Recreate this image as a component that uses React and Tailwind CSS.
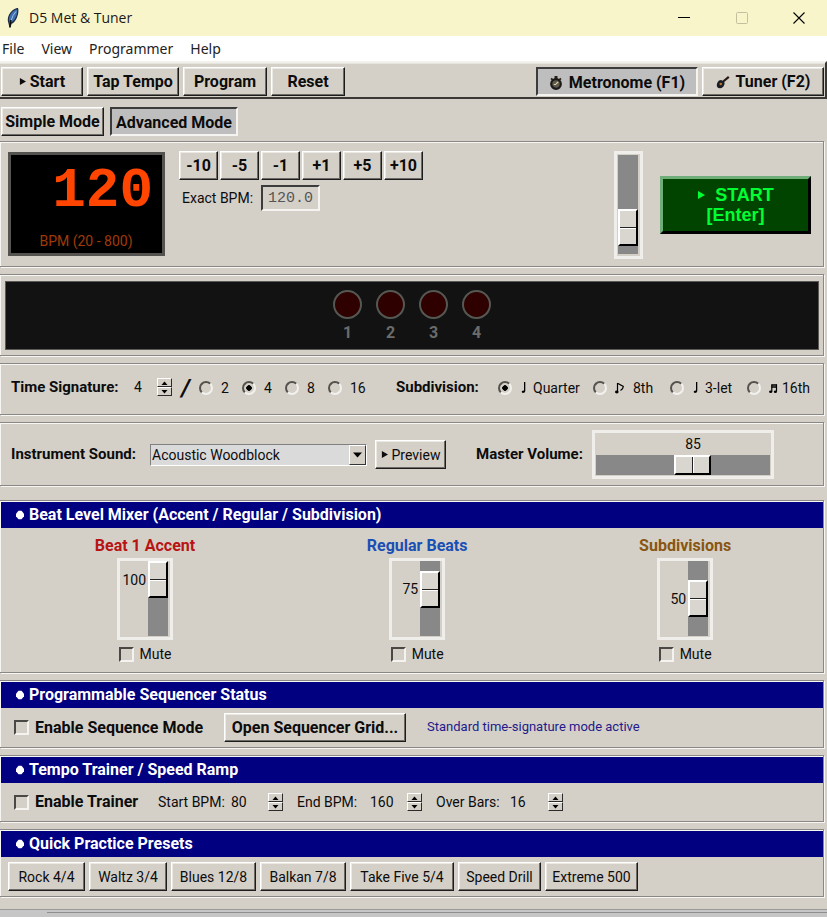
import React, { useState } from 'react';
import { clsx } from 'clsx';

const PRESETS = [
  { name: 'Rock 4/4', width: 'w-[77px]' },
  { name: 'Waltz 3/4', width: 'w-[78px]' },
  { name: 'Blues 12/8', width: 'w-[85px]' },
  { name: 'Balkan 7/8', width: 'w-[86px]' },
  { name: 'Take Five 5/4', width: 'w-[104px]' },
  { name: 'Speed Drill', width: 'w-[83px]' },
  { name: 'Extreme 500', width: 'w-[93px]' },
];

const CHANNELS = [
  { id: 'accent', name: 'Beat 1 Accent', color: 'text-[#b81414]', level: 100 },
  { id: 'regular', name: 'Regular Beats', color: 'text-[#1a4fb4]', level: 75 },
  { id: 'sub', name: 'Subdivisions', color: 'text-[#8a560f]', level: 50 },
];

const RAISED =
  'border border-t-white border-l-white border-r-[#1c1c1c] border-b-[#1c1c1c] shadow-[inset_-1px_-1px_0_#6e6b66,inset_1px_1px_0_#ebe9e4] bg-[#d4d0c8]';
const SUNKEN =
  'border-2 border-t-[#3c3c3c] border-l-[#3c3c3c] border-r-[#f4f3ef] border-b-[#f4f3ef]';

const PlayMark = ({ size = 8 }) => (
  <svg width={size} height={size} viewBox="0 0 8 8" fill="currentColor" className="shrink-0">
    <path d="M1 0 L8 4 L1 8 Z" />
  </svg>
);

const NoteIcon = ({ kind }) => (
  <svg width="10" height="12" viewBox="0 0 10 12" className="shrink-0">
    {kind === 'quarter' && (
      <path d="M4 0 H5.3 V9 Q5.1 11 3 11 Q1.6 11 1.7 9.6 Q2.2 8.4 4 8.4 Z" fill="#000" />
    )}
    {kind === 'eighth' && (
      <>
        <path d="M2.5 1 V10" stroke="#000" strokeWidth="1.2" />
        <path d="M2.5 1.2 L8.3 4.4 Q8.3 6.5 5.5 8.5" fill="none" stroke="#000" strokeWidth="1.2" />
        <ellipse cx="1.8" cy="10" rx="1.8" ry="1.4" fill="#000" />
      </>
    )}
    {kind === 'sixteenth' && (
      <>
        <path d="M2.5 3 H8 M2.5 5 H8" stroke="#000" strokeWidth="1.3" />
        <path d="M2.8 2.5 V9.5 M7.5 2.5 V9.5" stroke="#000" strokeWidth="1.2" />
        <ellipse cx="1.7" cy="9.8" rx="1.6" ry="1.2" fill="#000" />
        <ellipse cx="6.4" cy="9.8" rx="1.6" ry="1.2" fill="#000" />
      </>
    )}
  </svg>
);

const Button = ({ className, pressed, children, ...rest }) => (
  <button
    type="button"
    className={clsx(
      'flex h-[29px] shrink-0 items-center justify-center whitespace-nowrap',
      pressed ? SUNKEN + ' bg-[#bebebe] pt-0.5' : RAISED,
      className
    )}
    {...rest}
  >
    {children}
  </button>
);

const Panel = ({ title, className, children }) => (
  <section className="mr-[3px] border-y border-r border-[#8a8884] pt-px pl-px shadow-[inset_1px_1px_0_#f7f6f3,1px_1px_0_#f7f6f3]">
    {title && (
      <h2 className="flex h-[26px] items-center gap-1 bg-[#000080] pl-3.5 text-base font-bold text-white">
        <svg width="10" height="10" viewBox="0 0 10 10" fill="currentColor">
          <path d="M3.5 0.8 H6.5 L9 3.8 V6.2 L6.5 9.2 H3.5 L1 6.2 V3.8 Z" />
        </svg>
        {title}
      </h2>
    )}
    <div className={className}>{children}</div>
  </section>
);

const Spinner = ({ onUp, onDown, name }) => (
  <span className="flex w-[15px] shrink-0 flex-col">
    <button type="button" aria-label={`${name} up`} onClick={onUp} className="flex h-[9px] items-center justify-center border border-t-white border-l-white border-r-[#2b2b2b] border-b-[#2b2b2b]">
      <svg width="7" height="4" viewBox="0 0 7 4"><path d="M0.5 4 L3.5 0.5 L6.5 4 Z" /></svg>
    </button>
    <button type="button" aria-label={`${name} down`} onClick={onDown} className="flex h-[9px] items-center justify-center border border-t-white border-l-white border-r-[#2b2b2b] border-b-[#2b2b2b]">
      <svg width="7" height="4" viewBox="0 0 7 4"><path d="M0.5 0 L3.5 3.5 L6.5 0 Z" /></svg>
    </button>
  </span>
);

const SpinField = ({ id, label, initial, labelClass, inputClass }) => {
  const [value, setValue] = useState(initial);
  return (
    <div className="flex items-center">
      <label htmlFor={id} className={clsx('whitespace-nowrap', labelClass)}>{label}</label>
      <input
        id={id}
        value={value}
        onChange={(e) => setValue(Number(e.target.value) || 0)}
        className={clsx('bg-transparent outline-none', inputClass)}
      />
      <Spinner name={label} onUp={() => setValue(value + 1)} onDown={() => setValue(value - 1)} />
    </div>
  );
};

const Radio = ({ name, checked, onChange, className, children }) => (
  <label className={clsx('flex shrink-0 items-center whitespace-nowrap', className)}>
    <input
      type="radio"
      name={name}
      checked={checked}
      onChange={onChange}
      className="mr-2 size-[14px] shrink-0 appearance-none rounded-full border-2 border-t-[#55524e] border-l-[#55524e] border-r-[#f2f1ed] border-b-[#f2f1ed] checked:bg-[radial-gradient(circle,#000_0_2.5px,transparent_3px)]"
    />
    {children}
  </label>
);

const Checkbox = ({ label, className }) => (
  <label className={clsx('flex items-center gap-1.5 whitespace-nowrap', className)}>
    <input
      type="checkbox"
      className="size-[15px] shrink-0 appearance-none border-2 border-t-[#4a4844] border-l-[#4a4844] border-r-[#f4f3ef] border-b-[#f4f3ef] checked:bg-[#4a4844]"
    />
    {label}
  </label>
);

const VerticalScale = ({ className, ...rest }) => (
  <input
    type="range"
    className={clsx(
      'w-5 appearance-none bg-[#888888] [direction:rtl] [writing-mode:vertical-lr]',
      '[&::-webkit-slider-thumb]:h-[37px] [&::-webkit-slider-thumb]:w-5 [&::-webkit-slider-thumb]:appearance-none',
      '[&::-webkit-slider-thumb]:border-2 [&::-webkit-slider-thumb]:border-t-white [&::-webkit-slider-thumb]:border-l-white [&::-webkit-slider-thumb]:border-r-black [&::-webkit-slider-thumb]:border-b-black',
      '[&::-webkit-slider-thumb]:bg-[linear-gradient(#d9d6cf_0_16px,#222_16px_17px,#fff_17px_18px,#d9d6cf_18px)]',
      className
    )}
    {...rest}
  />
);

const TitleBar = () => (
  <header className="flex h-9 items-center bg-[#f9f5cb] pl-1.5 text-sm text-[#1a1a1a]">
    <svg width="14" height="20" viewBox="0 0 14 20">
      <path d="M11.5 0.5 Q6 2 3.5 7 Q1.5 11 3 15 L4 19 L5 15.5 Q9 13.5 10.5 9 Q12.5 4 11.5 0.5 Z" fill="#3f6fae" stroke="#1d2c44" strokeWidth="1.2" />
      <path d="M10 3.5 Q6.5 7 5 13" fill="none" stroke="#9fc0e8" strokeWidth="1" />
      <path d="M4.8 12 L4 19" stroke="#111" strokeWidth="1.6" />
    </svg>
    <h1 className="flex-1 pl-[9px] font-['Open_Sans',sans-serif]">D5 Met &amp; Tuner</h1>
    <button type="button" aria-label="Minimize" className="flex w-[58px] justify-center">
      <svg width="12" height="12" viewBox="0 0 12 12"><path d="M0 5.5 H12" stroke="#000" strokeWidth="1" shapeRendering="crispEdges" /></svg>
    </button>
    <button type="button" aria-label="Maximize" className="flex w-[58px] justify-center">
      <svg width="12" height="12" viewBox="0 0 12 12"><rect x="0.5" y="0.5" width="11" height="11" rx="1" fill="none" stroke="#c3c09d" /></svg>
    </button>
    <button type="button" aria-label="Close" className="flex w-14 justify-center">
      <svg width="12" height="12" viewBox="0 0 12 12"><path d="M0.5 0.5 L11.5 11.5 M11.5 0.5 L0.5 11.5" stroke="#000" strokeWidth="1.1" /></svg>
    </button>
  </header>
);

const MenuBar = () => (
  <nav className="flex h-[25px] items-center gap-[17px] bg-white pl-0.5 font-['Noto_Sans',sans-serif] text-sm text-[#222]">
    {['File', 'View', 'Programmer', 'Help'].map((item) => (
      <button key={item} type="button">{item}</button>
    ))}
  </nav>
);

const Toolbar = ({ tab, setTab }) => (
  <div className="flex items-center border-t-2 border-r-2 border-b-2 border-t-[#f3f1ec] border-r-[#3a3834] border-b-[#3a3834] pt-1 pr-px pb-px pl-px text-base font-bold shadow-[inset_0_1px_0_#e6e4de]">
    <div className="flex flex-1 gap-1">
      <Button className="w-[82px] gap-1"><PlayMark size={7} /> Start</Button>
      <Button className="w-[92px]">Tap Tempo</Button>
      <Button className="w-[84px]">Program</Button>
      <Button className="w-[74px]">Reset</Button>
    </div>
    <Button className="mr-1 w-[162px] gap-1.5" pressed={tab === 'metronome'} onClick={() => setTab('metronome')}>
      <svg width="14" height="14" viewBox="0 0 14 14">
        <rect x="5.5" y="0" width="3" height="3" fill="#2b2115" />
        <path d="M2 2.5 L4 4 M12 2.5 L10 4" stroke="#2b2115" strokeWidth="1.6" />
        <circle cx="7" cy="8" r="4.8" fill="#5c594e" stroke="#1c1a18" strokeWidth="2.2" />
        <path d="M7 8 L9.2 5.8 M4.8 8.5 H7" stroke="#e0cfa0" strokeWidth="1.2" />
      </svg>
      Metronome (F1)
    </Button>
    <Button className="w-[122px] gap-1.5" pressed={tab === 'tuner'} onClick={() => setTab('tuner')}>
      <svg width="14" height="14" viewBox="0 0 14 14">
        <path d="M6 7.5 L12.8 1.8" stroke="#2a1b12" strokeWidth="2.2" />
        <path d="M3 5.5 Q6 4 7 6.5 Q9.3 7 8.3 9.8 Q7 13.3 4 13.2 Q0.4 13 0.8 9.5 Q1.2 7 3 5.5 Z" fill="#1b1d26" />
        <circle cx="4.8" cy="9" r="1.3" fill="#b87333" />
      </svg>
      Tuner (F2)
    </Button>
  </div>
);

const TempoPanel = ({ bpm, setBpm }) => (
  <Panel className="flex h-[123px] items-start pt-2 pl-[7px]">
    <div className="mt-px flex h-[104px] w-[157px] flex-col justify-between border-[3px] border-[#55534f] bg-black pr-[9px] pb-1">
      <output className="pt-2 text-right font-['Liberation_Mono',monospace] text-[56px] leading-[56px] font-bold text-[#ff4500]">{bpm}</output>
      <span className="pl-2 text-center text-sm leading-4 text-[#a03a08]">BPM (20 - 800)</span>
    </div>
    <div className="ml-3.5">
      <div className="flex gap-0.5 text-base font-bold">
        {[-10, -5, -1, 1, 5, 10].map((step) => (
          <Button key={step} className="w-[39px]" onClick={() => setBpm(bpm + step)}>
            {step > 0 ? `+${step}` : step}
          </Button>
        ))}
      </div>
      <div className="mt-[5px] flex items-center pl-[3px]">
        <label htmlFor="exact-bpm" className="w-[79px] whitespace-nowrap">Exact BPM:</label>
        <input
          id="exact-bpm"
          value={bpm.toFixed(1)}
          readOnly
          className={clsx(SUNKEN, "h-[26px] w-[59px] bg-transparent pl-[5px] font-['Liberation_Mono',monospace] text-[15px] text-[#555]")}
        />
      </div>
    </div>
    <div className="mr-[17px] ml-auto border-[3px] border-[#f0eeea] pt-px pr-0.5 pb-0.5 pl-px">
      <VerticalScale
        aria-label="Tempo"
        min="20"
        max="800"
        value={bpm}
        onChange={(e) => setBpm(Number(e.target.value))}
        className="block h-[99px]"
      />
    </div>
    <button
      type="button"
      className="mt-[25px] mr-3 flex h-[58px] w-[151px] flex-col items-center justify-center border-[3px] border-t-[#6fae78] border-r-black border-b-black border-l-[#6fae78] bg-[#004400] font-['Liberation_Sans',sans-serif] text-lg leading-5 font-bold text-[#00ff33]"
    >
      <span className="flex items-center gap-2.5"><PlayMark size={8} /> START</span>
      <span>[Enter]</span>
    </button>
  </Panel>
);

const BeatPanel = () => (
  <Panel className="py-[5px] pr-1 pl-1">
    <div className="flex h-[69px] justify-center border border-[#5c5a56] bg-[#121212] pt-2">
      {[1, 2, 3, 4].map((beat) => (
        <div key={beat} className="flex w-[43px] flex-col items-center text-base leading-5 font-bold text-[#6b6b6b]">
          <span className="mb-1 size-[29px] rounded-full border-2 border-[#555852] bg-[#2e0000]" />
          {beat}
        </div>
      ))}
    </div>
  </Panel>
);

const TimePanel = () => {
  const [unit, setUnit] = useState(4);
  const [division, setDivision] = useState('Quarter');
  return (
    <Panel className="flex h-[49px] items-center pb-1 pl-2.5">
      <SpinField id="beats" label="Time Signature:" initial={4} labelClass="w-[123px] text-[15px] font-bold" inputClass="w-[23px]" />
      <span className="w-[27px] text-center text-2xl leading-6 font-bold italic">/</span>
      {[2, 4, 8, 16].map((n) => (
        <Radio key={n} name="unit" checked={unit === n} onChange={() => setUnit(n)} className={n === 16 ? 'w-[68px]' : 'w-[43px]'}>
          {n}
        </Radio>
      ))}
      <span className="w-[102px] text-[15px] font-bold whitespace-nowrap">Subdivision:</span>
      {[
        { name: 'Quarter', icon: 'quarter', width: 'w-[95px]' },
        { name: '8th', icon: 'eighth', width: 'w-[77px]' },
        { name: '3-let', icon: 'quarter', width: 'w-[77px]' },
        { name: '16th', icon: 'sixteenth', width: 'w-[62px]' },
      ].map((d) => (
        <Radio key={d.name} name="division" checked={division === d.name} onChange={() => setDivision(d.name)} className={d.width}>
          <NoteIcon kind={d.icon} />
          <span className={d.icon === 'eighth' ? 'pl-2' : 'pl-[3px]'}>{d.name}</span>
        </Radio>
      ))}
    </Panel>
  );
};

const SoundPanel = () => {
  const [volume, setVolume] = useState(85);
  return (
    <Panel className="flex h-[61px] items-center pl-2.5">
      <label htmlFor="sound" className="w-[139px] text-[15px] font-bold whitespace-nowrap">Instrument Sound:</label>
      <div className="relative w-[217px]">
        <select id="sound" className="block h-[22px] w-full appearance-none border border-t-[#808080] border-l-[#808080] border-r-white border-b-white bg-[#dadada] pl-px">
          <option>Acoustic Woodblock</option>
          <option>Digital Click</option>
        </select>
        <span className="pointer-events-none absolute top-px right-px flex h-5 w-[17px] items-center justify-center border border-t-white border-l-white border-r-[#333] border-b-[#333] bg-[#d4d0c8]">
          <svg width="9" height="6" viewBox="0 0 9 6"><path d="M0 0.5 H9 L4.5 5.5 Z" /></svg>
        </span>
      </div>
      <Button className="ml-2 w-[71px] gap-1"><PlayMark size={7} /> Preview</Button>
      <label htmlFor="volume" className="ml-[30px] w-[116px] text-[15px] font-bold whitespace-nowrap">Master Volume:</label>
      <div className="flex w-[182px] flex-col items-center border-[3px] border-[#f0eeea] pb-px">
        <output htmlFor="volume" className="pl-5 leading-[22px]">{volume}</output>
        <input
          id="volume"
          type="range"
          min="0"
          max="150"
          value={volume}
          onChange={(e) => setVolume(Number(e.target.value))}
          className="block h-5 w-[174px] appearance-none bg-[#888888] [&::-webkit-slider-thumb]:h-5 [&::-webkit-slider-thumb]:w-[37px] [&::-webkit-slider-thumb]:appearance-none [&::-webkit-slider-thumb]:border-2 [&::-webkit-slider-thumb]:border-t-white [&::-webkit-slider-thumb]:border-l-white [&::-webkit-slider-thumb]:border-r-black [&::-webkit-slider-thumb]:border-b-black [&::-webkit-slider-thumb]:bg-[linear-gradient(90deg,#d9d6cf_0_16px,#222_16px_17px,#fff_17px_18px,#d9d6cf_18px)]"
        />
      </div>
    </Panel>
  );
};

const Channel = ({ id, name, color, level }) => {
  const [value, setValue] = useState(level);
  return (
    <div className="flex flex-col items-center">
      <label htmlFor={id} className={clsx('text-base leading-5 font-bold', color)}>{name}</label>
      <div className="mt-0.5 flex w-14 justify-end border-[3px] border-[#f0eeea] pr-0.5 pb-px">
        <div className="flex h-[75px] flex-col pr-0.5">
          <span style={{ flexGrow: 100 - value }} />
          <output htmlFor={id} className="flex h-[38px] shrink-0 items-center">{value}</output>
          <span style={{ flexGrow: value }} />
        </div>
        <VerticalScale id={id} min="0" max="100" value={value} onChange={(e) => setValue(Number(e.target.value))} className="block h-[75px]" />
      </div>
      <Checkbox label="Mute" className="mt-1 h-5" />
    </div>
  );
};

export default function App() {
  const [tab, setTab] = useState('metronome');
  const [mode, setMode] = useState('advanced');
  const [bpm, setBpm] = useState(120);

  return (
    <div className="flex min-h-screen flex-col bg-[#d4d0c8] font-['Roboto',sans-serif] text-sm text-[#0c0c0c]">
      <TitleBar />
      <MenuBar />
      <Toolbar tab={tab} setTab={setTab} />

      <div className="flex gap-1.5 pt-2 pb-[5px] pl-px text-base font-bold">
        <Button className="w-[103px]" pressed={mode === 'simple'} onClick={() => setMode('simple')}>Simple Mode</Button>
        <Button className="w-[128px]" pressed={mode === 'advanced'} onClick={() => setMode('advanced')}>Advanced Mode</Button>
      </div>

      <main className="flex flex-col gap-[7px]">
        <TempoPanel bpm={bpm} setBpm={setBpm} />
        <BeatPanel />
        <TimePanel />
        <SoundPanel />

        <div className="mt-[7px]">
          <Panel title="Beat Level Mixer (Accent / Regular / Subdivision)" className="flex justify-around pt-2 pr-1.5 pb-2 pl-2">
            {CHANNELS.map((c) => <Channel key={c.id} {...c} />)}
          </Panel>
        </div>

        <Panel title="Programmable Sequencer Status" className="flex h-[39px] items-center pl-[13px]">
          <Checkbox label="Enable Sequence Mode" className="w-[210px] text-base font-bold" />
          <Button className="w-[182px] text-base font-bold">Open Sequencer Grid...</Button>
          <span className="pl-[21px] text-[13px] text-[#221a8c]">Standard time-signature mode active</span>
        </Panel>

        <Panel title="Tempo Trainer / Speed Ramp" className="flex h-[38px] items-center pl-[13px]">
          <Checkbox label="Enable Trainer" className="w-36 text-base font-bold" />
          <div className="flex gap-3.5">
            <SpinField id="start-bpm" label="Start BPM:" initial={80} labelClass="w-[73px]" inputClass="w-[37px]" />
            <SpinField id="end-bpm" label="End BPM:" initial={160} labelClass="w-[73px]" inputClass="w-[37px]" />
            <SpinField id="over-bars" label="Over Bars:" initial={16} labelClass="w-[74px]" inputClass="w-[38px]" />
          </div>
        </Panel>

        <Panel title="Quick Practice Presets" className="flex h-[39px] items-center gap-1 pl-[7px]">
          {PRESETS.map((p) => <Button key={p.name} className={p.width}>{p.name}</Button>)}
        </Panel>
      </main>

      <footer className="mt-3 flex-1 border-t border-[#9c9a97] bg-[#c6c6c6] pt-0.5 pl-[47px]">
        <div className="h-px bg-[#8f8f8f]" />
      </footer>
    </div>
  );
}
